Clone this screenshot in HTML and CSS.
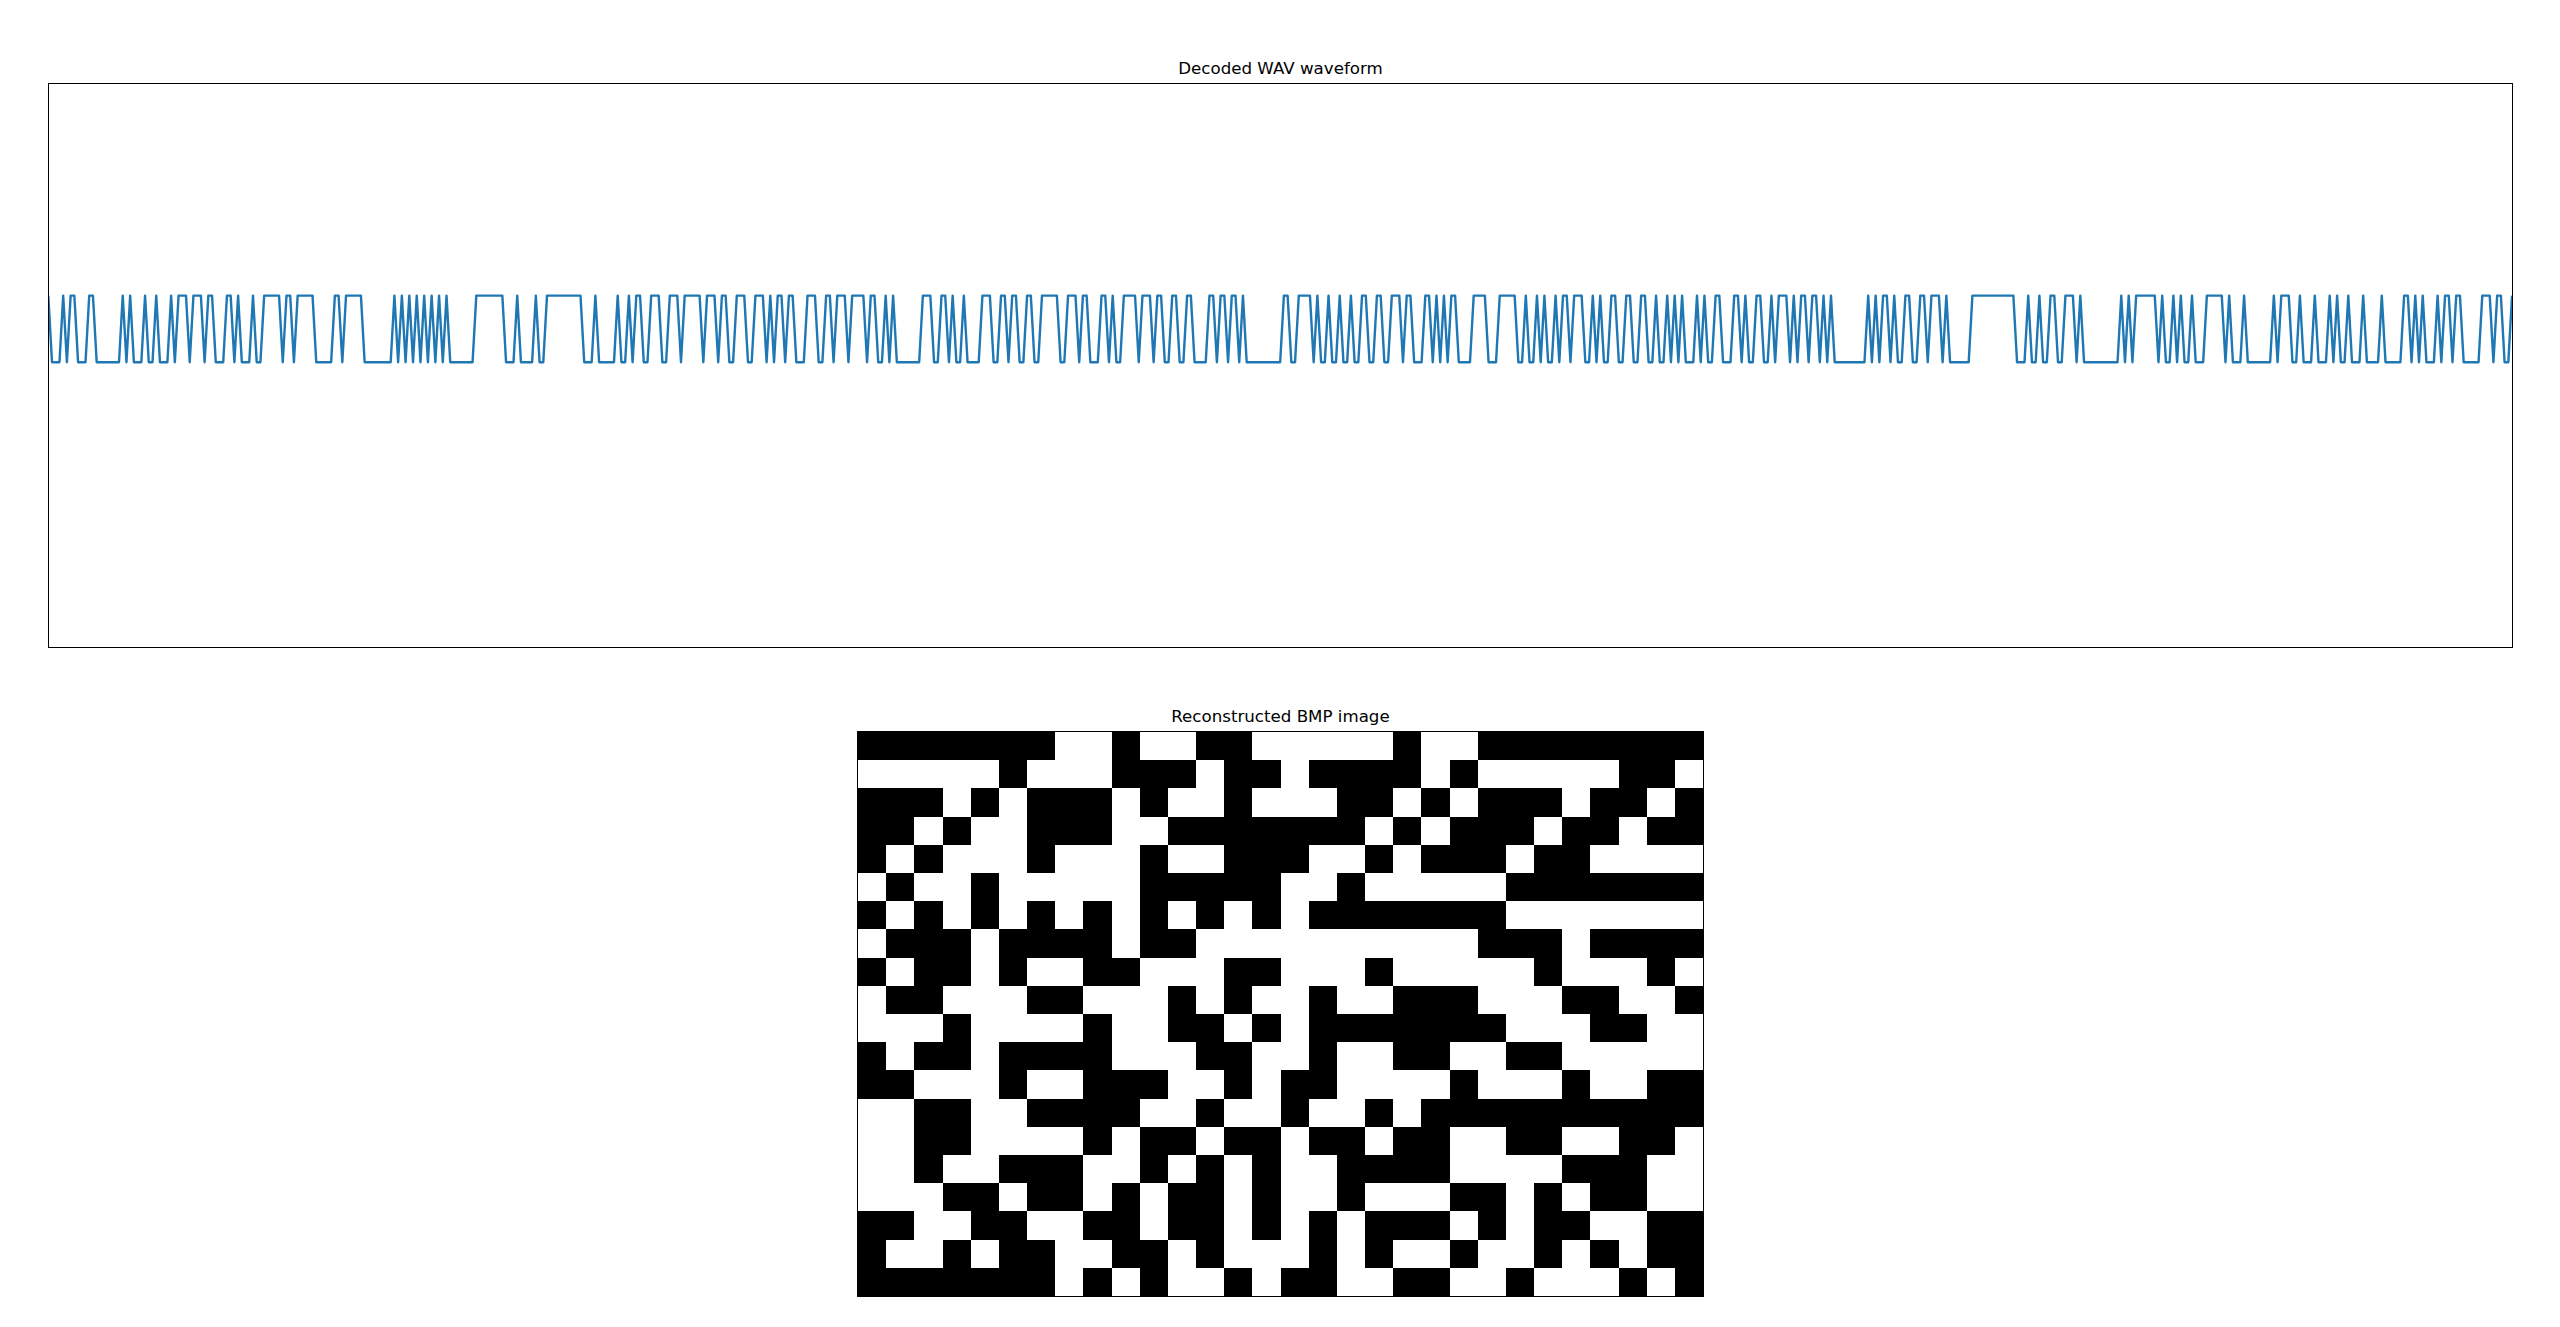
FILE: index.html
```html
<!DOCTYPE html>
<html lang="en">
<head>
<meta charset="UTF-8">
<title>Decoded WAV and BMP</title>
<link rel="stylesheet" href="styles.css">
</head>
<body>
	<div class="figure">
		<div class="panel panel-wave">
			<h2 class="panel-title">Decoded WAV waveform</h2>
			<div class="axes axes-wave">
				<svg class="plot" viewBox="0.188 -3.178 661.8 8.453" preserveAspectRatio="none">
					<path class="wave-line" d="M0 0L1 1 3 1 4 0 5 1 6 0 7 0 8 1 10 1 11 0 12 0 13 1 19 1 20 0 21 1 22 0 23 1 25 1 26 0 27 1 28 1 29 0 30 1 32 1 33 0 34 1 35 0 37 0 38 1 39 0 41 0 42 1 43 0 44 0 45 1 47 1 48 0 49 0 50 1 51 0 52 1 54 1 55 0 56 1 57 1 58 0 62 0 63 1 64 0 65 0 66 1 67 0 71 0 72 1 76 1 77 0 78 0 79 1 80 0 84 0 85 1 92 1 93 0 94 1 95 0 96 1 97 0 98 1 99 0 100 1 101 0 102 1 103 0 104 1 105 0 106 1 107 0 108 1 114 1 115 0 122 0 123 1 125 1 126 0 127 1 130 1 131 0 132 1 133 1 134 0 143 0 144 1 146 1 147 0 148 1 152 1 153 0 154 1 155 1 156 0 157 1 158 0 159 0 160 1 161 1 162 0 164 0 165 1 166 1 167 0 169 0 170 1 171 0 175 0 176 1 177 0 179 0 180 1 181 0 182 0 183 1 184 1 185 0 187 0 188 1 189 1 190 0 192 0 193 1 194 0 195 1 196 0 197 0 198 1 199 0 200 0 201 1 203 1 204 0 206 0 207 1 208 1 209 0 210 0 211 1 212 0 214 0 215 1 216 0 219 0 220 1 221 0 222 0 223 1 224 1 225 0 226 1 227 0 228 1 234 1 235 0 237 0 238 1 239 1 240 0 241 0 242 1 243 0 244 1 245 1 246 0 247 1 250 1 251 0 253 0 254 1 255 1 256 0 257 0 258 1 259 0 260 0 261 1 262 1 263 0 264 0 265 1 266 1 267 0 271 0 272 1 273 1 274 0 276 0 277 1 278 0 279 0 280 1 282 1 283 0 284 0 285 1 286 0 287 1 288 1 289 0 292 0 293 1 294 0 296 0 297 1 298 0 299 0 300 1 301 1 302 0 303 0 304 1 305 1 306 0 307 0 308 1 311 1 312 0 313 0 314 1 315 0 316 0 317 1 318 0 319 0 320 1 321 0 322 1 331 1 332 0 333 0 334 1 335 1 336 0 339 0 340 1 341 0 342 1 343 1 344 0 345 1 346 1 347 0 348 1 349 1 350 0 351 1 352 1 353 0 354 0 355 1 356 1 357 0 358 0 359 1 360 1 361 0 363 0 364 1 365 0 366 0 367 1 369 1 370 0 371 0 372 1 373 0 374 1 375 0 376 1 377 0 378 0 379 1 382 1 383 0 386 0 387 1 389 1 390 0 394 0 395 1 396 1 397 0 398 1 399 1 400 0 401 1 402 0 403 1 404 1 405 0 406 1 407 0 408 0 409 1 410 0 412 0 413 1 414 1 415 0 416 1 417 0 418 1 419 1 420 0 421 0 422 1 423 1 424 0 425 0 426 1 427 1 428 0 429 0 430 1 431 1 432 0 433 1 434 1 435 0 436 1 437 0 438 1 439 0 440 1 442 1 443 0 444 1 445 0 446 1 447 1 448 0 449 0 450 1 452 1 453 0 454 0 455 1 456 0 457 1 458 1 459 0 460 0 461 1 462 1 463 0 464 1 465 0 467 0 468 1 469 0 470 1 471 0 472 0 473 1 474 0 475 0 476 1 477 0 478 1 479 0 480 1 488 1 489 0 490 1 491 0 492 1 493 0 494 0 495 1 496 0 497 1 498 1 499 0 500 0 501 1 502 1 503 0 504 0 505 1 506 0 508 0 509 1 510 0 511 1 516 1 517 0 528 0 529 1 531 1 532 0 533 1 534 1 535 0 536 1 537 1 538 0 539 0 540 1 541 1 542 0 544 0 545 1 546 0 547 1 556 1 557 0 558 1 559 0 560 1 561 0 566 0 567 1 568 0 569 1 570 1 571 0 572 1 573 0 574 1 575 1 576 0 577 1 579 1 580 0 584 0 585 1 586 0 587 1 589 1 590 0 591 1 597 1 598 0 599 1 600 0 602 0 603 1 604 1 605 0 606 1 608 1 609 0 610 1 612 1 613 0 614 1 615 0 616 1 617 1 618 0 619 1 621 1 622 0 623 1 626 1 627 0 628 1 632 1 633 0 634 0 635 1 636 0 637 1 638 0 639 1 641 1 642 0 643 1 644 0 645 0 646 1 647 0 648 0 649 1 653 1 654 0 656 0 657 1 658 0 659 0 660 1 661 1 662 0"/>
				</svg>
			</div>
		</div>
		<div class="panel panel-bitmap">
			<h2 class="panel-title">Reconstructed BMP image</h2>
			<div class="axes axes-bitmap">
				<svg class="plot" viewBox="0 0 30 20" preserveAspectRatio="none">
					<path class="bitmap-cells" d="M0 .5h7M9 .5h1M12 .5h2M19 .5h1M22 .5h8
						M5 1.5h1M9 1.5h3M13 1.5h2M16 1.5h4M21 1.5h1M27 1.5h2
						M0 2.5h3M4 2.5h1M6 2.5h3M10 2.5h1M13 2.5h1M17 2.5h2M20 2.5h1M22 2.5h3M26 2.5h2M29 2.5h1
						M0 3.5h2M3 3.5h1M6 3.5h3M11 3.5h7M19 3.5h1M21 3.5h3M25 3.5h2M28 3.5h2
						M0 4.5h1M2 4.5h1M6 4.5h1M10 4.5h1M13 4.5h3M18 4.5h1M20 4.5h3M24 4.5h2
						M1 5.5h1M4 5.5h1M10 5.5h5M17 5.5h1M23 5.5h7
						M0 6.5h1M2 6.5h1M4 6.5h1M6 6.5h1M8 6.5h1M10 6.5h1M12 6.5h1M14 6.5h1M16 6.5h7
						M1 7.5h3M5 7.5h4M10 7.5h2M22 7.5h3M26 7.5h4
						M0 8.5h1M2 8.5h2M5 8.5h1M8 8.5h2M13 8.5h2M18 8.5h1M24 8.5h1M28 8.5h1
						M1 9.5h2M6 9.5h2M11 9.5h1M13 9.5h1M16 9.5h1M19 9.5h3M25 9.5h2M29 9.5h1
						M3 10.5h1M8 10.5h1M11 10.5h2M14 10.5h1M16 10.5h7M26 10.5h2
						M0 11.5h1M2 11.5h2M5 11.5h4M12 11.5h2M16 11.5h1M19 11.5h2M23 11.5h2
						M0 12.5h2M5 12.5h1M8 12.5h3M13 12.5h1M15 12.5h2M21 12.5h1M25 12.5h1M28 12.5h2
						M2 13.5h2M6 13.5h4M12 13.5h1M15 13.5h1M18 13.5h1M20 13.5h10
						M2 14.5h2M8 14.5h1M10 14.5h2M13 14.5h2M16 14.5h2M19 14.5h2M23 14.5h2M27 14.5h2
						M2 15.5h1M5 15.5h3M10 15.5h1M12 15.5h1M14 15.5h1M17 15.5h4M25 15.5h3
						M3 16.5h2M6 16.5h2M9 16.5h1M11 16.5h2M14 16.5h1M17 16.5h1M21 16.5h2M24 16.5h1M26 16.5h2
						M0 17.5h2M4 17.5h2M8 17.5h2M11 17.5h2M14 17.5h1M16 17.5h1M18 17.5h3M22 17.5h1M24 17.5h2M28 17.5h2
						M0 18.5h1M3 18.5h1M5 18.5h2M9 18.5h2M12 18.5h1M16 18.5h1M18 18.5h1M21 18.5h1M24 18.5h1M26 18.5h1M28 18.5h2
						M0 19.5h7M8 19.5h1M10 19.5h1M13 19.5h1M15 19.5h2M19 19.5h2M23 19.5h1M27 19.5h1M29 19.5h1"/>
				</svg>
			</div>
		</div>
	</div>
</body>
</html>
```

FILE: styles.css
```css
body {margin: 0;background-color: #fff;color: #000;font-family: "DejaVu Sans", sans-serif;}
.figure {width: 2465px;margin-left: 48px;padding-top: 59px;display: flex;flex-direction: column;align-items: center;gap: 59px;}
.panel {display: flex;flex-direction: column;align-items: center;gap: 4px;}
.panel-title {margin: 0;font-size: 16.67px;font-weight: normal;line-height: 20px;white-space: nowrap;}
.axes {box-sizing: border-box;border: 1px solid #000;}
.axes-wave {width: 2465px;height: 565px;}
.axes-bitmap {width: 847px;height: 566px;}
.plot {display: block;width: 100%;height: 100%;}
.wave-line {fill: none;stroke: #1f77b4;stroke-width: 2.4px;stroke-linejoin: round;vector-effect: non-scaling-stroke;}
.bitmap-cells {fill: none;stroke: #000;stroke-width: 1;shape-rendering: crispEdges;}
```
